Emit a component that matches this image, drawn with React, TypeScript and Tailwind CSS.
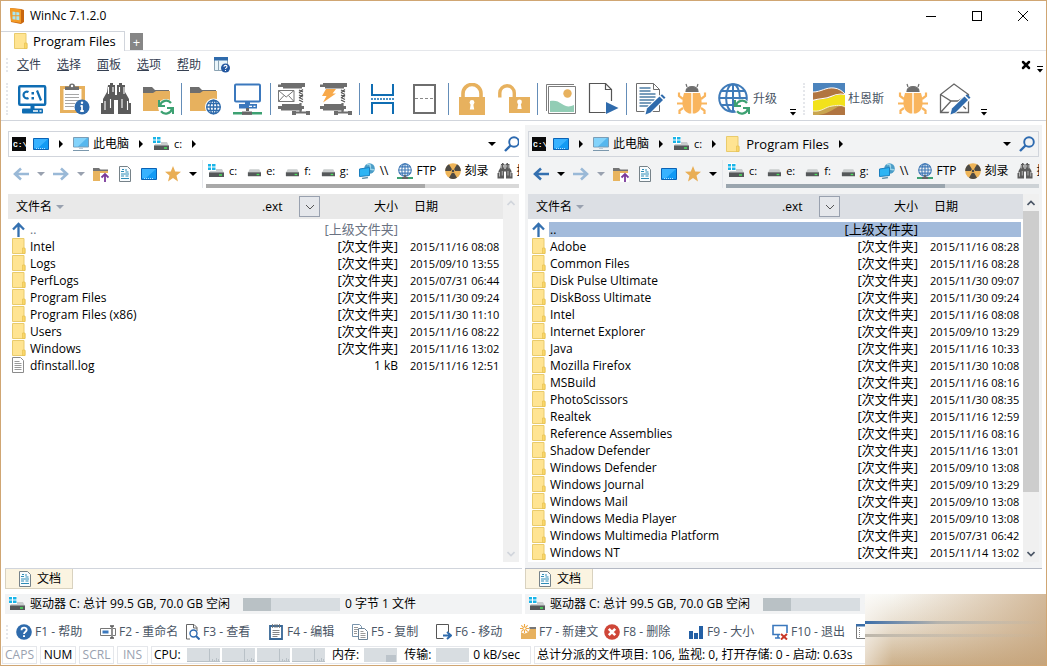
import React, { useState } from "react";
import clsx from "clsx";
import { X } from "lucide-react";

type IconProps = { className?: string };

const GRAY = "#6e6e6e";
const AMBER = "#e7b15e";
const BLUE = "#2f6bac";
const GREEN = "#3da172";

function Svg({ size = 32, className = "w-8 h-8", children }: { size?: number; className?: string; children: React.ReactNode }) {
  return (
    <svg viewBox={`0 0 ${size} ${size}`} className={clsx("shrink-0 block", className)} fill="none" aria-hidden="true">
      {children}
    </svg>
  );
}

/* Shared drawing parts */

function SyncBadge() {
  return (
    <g>
      <circle cx="24" cy="24" r="8" fill="white" />
      <path d="M18 22.5a6.3 6.3 0 0 1 11-2.5M30 25.5a6.3 6.3 0 0 1-11 2.8" stroke={GREEN} strokeWidth="2.2" />
      <path d="M17 17v6h6M31 31v-6h-6" stroke={GREEN} strokeWidth="2" />
    </g>
  );
}

function GlobeLines({ cx, cy, r, color, width }: { cx: number; cy: number; r: number; color: string; width: number }) {
  return (
    <g stroke={color} strokeWidth={width}>
      <circle cx={cx} cy={cy} r={r} />
      <ellipse cx={cx} cy={cy} rx={r * 0.5} ry={r} />
      <path d={`M${cx} ${cy - r}v${2 * r}M${cx - r} ${cy}h${2 * r}M${cx - r * 0.85} ${cy - r * 0.5}h${r * 1.7}M${cx - r * 0.85} ${cy + r * 0.5}h${r * 1.7}`} />
    </g>
  );
}

function BigFolder() {
  return (
    <g>
      <path d="M1 4h9l3 3h14v3H1z" fill={GRAY} />
      <path d="M1 10h10l3-2h14v20H1z" fill={AMBER} />
    </g>
  );
}

function Pen() {
  return (
    <g>
      <path d="M10 31.5l3-6L27 12l4 3.5L17 29z" fill="white" stroke="white" strokeWidth="2" />
      <path d="M13 25.5L25.5 13.5l3.5 3.5L16.5 29.5l-5 2z" fill={BLUE} />
      <path d="M26.5 12.5l1.5-1.3 3.5 3.2-1.5 1.6z" fill={BLUE} />
    </g>
  );
}

/* Toolbar icons */

function CommandIcon() {
  return (
    <Svg>
      <rect x="3.2" y="3.2" width="26" height="18.5" rx="1" stroke="#0f6db3" strokeWidth="2.4" />
      <path d="M12.5 9a3.4 3.4 0 1 0 0 6M21 7.5l4 10" stroke="#0f6db3" strokeWidth="2.2" />
      <path d="M15.5 9H18v2.500h-2.500zM15.500 14H18v2.500h-2.500zM14.500 22h4v4h-4z" fill="#0f6db3" />
      <rect x="6" y="25.5" width="21" height="5" rx="1" fill="#0f6db3" />
      <path d="M17 28h5M23.5 28h2" stroke="white" strokeWidth="1.3" />
    </Svg>
  );
}

function ClipboardInfoIcon() {
  return (
    <Svg>
      <path d="M2 3h25v27H2z" fill={AMBER} />
      <path d="M5.5 6h18v21h-18z" fill="white" />
      <path d="M7 7V3.5h4a3 3 0 0 1 6 0h4V7z" fill={GRAY} />
      <circle cx="14" cy="3" r="1.2" fill="white" />
      <path d="M7 11.5h14M7 14.5h14M7 17.5h14M7 20.5h10M7 23.5h9" stroke="#a7a7a7" />
      <circle cx="24" cy="24" r="7.5" fill={BLUE} />
      <path d="M24 22.5v6M22.5 23h2M22.3 28h3.5" stroke="white" strokeWidth="1.8" />
      <circle cx="24" cy="19.8" r="1.2" fill="white" />
    </Svg>
  );
}

function BinocularsIcon({ className }: IconProps) {
  return (
    <Svg className={className}>
      <path d="M8 2h2V0h3v2h2v10h2V2h2V0h3v2h3v7l4 7v4h2v11H18V17h-4v14H1V20h2v-4l4-7z" fill="#5b5b5b" />
      <path d="M8.5 4v7M13 4v5M19.5 4v5M24 4v7M5 18v9M10.5 16v9M22 16v9M27.5 18v9" stroke="white" strokeWidth="1.1" />
    </Svg>
  );
}

function FolderSyncIcon() {
  return (
    <Svg>
      <BigFolder />
      <SyncBadge />
    </Svg>
  );
}

function FolderGlobeIcon() {
  return (
    <Svg>
      <BigFolder />
      <circle cx="24.5" cy="24" r="8.5" fill="white" />
      <GlobeLines cx={24.5} cy={24} r={6.8} color={BLUE} width={1.4} />
    </Svg>
  );
}

function NetworkIcon() {
  return (
    <Svg>
      <rect x="4" y="1.5" width="25" height="17" rx="1" stroke="#3b78bd" strokeWidth="2" />
      <path d="M14 18.5h5V21h-5zM8 21h18v4.5H8z" fill="#3b78bd" />
      <path d="M18 23.3h3M22.5 23.3h2" stroke="white" strokeWidth="1.2" />
      <path d="M16.5 25v3" stroke="#666" strokeWidth="3" />
      <path d="M2 30.2h10M21 30.2h10" stroke={GREEN} strokeWidth="2.6" />
      <path d="M11 30.2h10" stroke="#666" strokeWidth="3.4" />
    </Svg>
  );
}

function Clamp() {
  return (
    <g>
      <path d="M0 1.5h3V0h24v4h-3v1.500H5V4H0zM0 23h4v-2h18v2h4v3h-2v1.500H3V26H0z" fill={GRAY} />
      <path d="M21 7l4 2M21 9.500l4 2M21 12l4 2M21 14.500l4 2M21 17l4 2M25 6.500l-4 3M25 12l-4 3" stroke="#555" strokeWidth="1.2" />
      <path d="M22.5 20v9M15 29.500h16" stroke={GRAY} strokeWidth="2.2" />
      <path d="M14 28h4v4h-4zM28 28h4v4h-4z" fill={GRAY} />
    </g>
  );
}

function ZipMailIcon() {
  return (
    <Svg>
      <Clamp />
      <path d="M.5 7.500h15.500v11H.5zM.5 7.500l7.700 6.500L16 7.500M.5 18.500l5.500-6M16 18.500l-5.500-6" stroke="#777" />
    </Svg>
  );
}

function ZipFlashIcon() {
  return (
    <Svg>
      <Clamp />
      <path d="M6 6h10l-3.500 4.500H16L3 19.500l3.500-6.500H2z" fill="#f8a94a" />
    </Svg>
  );
}

function SplitIcon() {
  return (
    <Svg>
      <path d="M5 1v11h21V1M5 31V20h21v11" stroke="#0f6db3" strokeWidth="2" />
      <path d="M4 16h23" stroke="#0f6db3" strokeWidth="1.4" strokeDasharray="2 1" />
    </Svg>
  );
}

function SinglePaneIcon() {
  return (
    <Svg>
      <rect x="5" y="2" width="21" height="28" stroke={GRAY} strokeWidth="2" />
      <path d="M6 15.500h19" stroke="#888" strokeDasharray="3 2" />
    </Svg>
  );
}

function Keyhole({ x, y }: { x: number; y: number }) {
  return (
    <g fill="white">
      <circle cx={x} cy={y} r="2.4" />
      <path d={`M${x - 1} ${y}h2l1.200 7h-4.400z`} />
    </g>
  );
}

function LockIcon() {
  return (
    <Svg>
      <path d="M3 14h26v18H3z" fill={AMBER} />
      <path d="M7 14v-3.500a9 9 0 0 1 18 0V14" stroke={AMBER} strokeWidth="3.6" />
      <Keyhole x={16} y={19.5} />
    </Svg>
  );
}

function UnlockIcon() {
  return (
    <Svg>
      <path d="M11 14h21v16H11z" fill={AMBER} />
      <path d="M1.8 14.500V10a7 7 0 0 1 14.500 0v4" stroke={AMBER} strokeWidth="3.4" />
      <Keyhole x={21.5} y={19} />
    </Svg>
  );
}

function PictureIcon() {
  return (
    <Svg>
      <path d="M1.500 28V1.500H29" stroke="#7d7d7d" />
      <path d="M3.500 3.500h27v27h-27z" fill="white" stroke="#7d7d7d" />
      <path d="M5 18c5-1 8 0 12 3s8 3 12 1v7H5z" fill="#92cdb5" />
      <circle cx="22.500" cy="10.500" r="4.200" fill={AMBER} />
    </Svg>
  );
}

function DocPlayIcon() {
  return (
    <Svg>
      <path d="M24.500 18V6.500l-6-6h-16v29h16" stroke="#555" strokeWidth="1.200" />
      <path d="M18.500.5v6h6" stroke="#555" strokeWidth="1.200" />
      <path d="M19 19l12.500 6L19 31z" fill={BLUE} />
    </Svg>
  );
}

function DocPenIcon() {
  return (
    <Svg>
      <path d="M2.500 28.500V.5h17l6 6v22z" stroke={GRAY} />
      <path d="M19.500.5v6h6" stroke={GRAY} />
      <path d="M5.500 5h11M5.500 8h11M5.500 11h16M5.500 14h16M5.500 17h15M5.500 20h12M5.500 23h9" stroke="#4d7ea5" strokeWidth="1.300" />
      <Pen />
    </Svg>
  );
}

function BugIcon() {
  return (
    <Svg>
      <path d="M11 4l-1-3M21 4l1-3M10 8.500c0-6.500 12-6.500 12 0z" fill={GRAY} stroke={GRAY} strokeWidth="1.200" />
      <path d="M7 16L3 13V9.500M25 16l4-3V9.500M7 20.500H1M25 20.500h6M7 25l-3.500 2.500V31M25 25l3.500 2.500V31" stroke="#f9b55e" strokeWidth="2.200" />
      <path d="M8 10h16c3 10 2 18-5 20.500h-6C6 28 5 20 8 10z" fill="#f9b55e" />
      <path d="M16 10v21" stroke="white" strokeWidth="1.400" />
    </Svg>
  );
}

function GlobeSyncIcon() {
  return (
    <Svg>
      <GlobeLines cx={15} cy={15} r={13.8} color="#3f7bb9" width={2} />
      <SyncBadge />
    </Svg>
  );
}

function DuneLogo() {
  return (
    <Svg>
      <path d="M0 0h32v32H0z" fill="#4c84bd" />
      <path d="M0 9c8 0 13-5 21-4 5 .5 8 3 11 6v21H0z" fill="#b17541" />
      <path d="M0 9c8 0 13-5 21-4 5 .5 8 3 11 6" stroke="white" />
      <path d="M0 18c9-3 12-1 18-4s10-3 14-2v20H0z" fill="#f2e21b" />
      <path d="M0 17.500c9-3 12-1 18-4s10-3 14-2" stroke="white" strokeWidth="1.200" />
      <path d="M0 28c9 1 12-4 19-5s10-1 13 1v8H0z" fill="#c9a550" />
      <path d="M5 32c8-1 13-4 18-7s7-1 9-1v8z" fill="#b17541" />
      <path d="M0 28c9 1 12-4 19-5s10-1 13 1" stroke="#f7f0d0" />
    </Svg>
  );
}

function EnvelopeIcon() {
  return (
    <Svg>
      <path d="M1.500 29.500v-18L15 1l14.500 10.500v18zM1.500 11.500L12 18h7l10.500-6.500M1.500 29.500L12 18M19 18l8 8" stroke="#666" strokeWidth="1.300" />
      <Pen />
    </Svg>
  );
}

/* Small icons, 16 pixel grid */

function FolderSmall() {
  return (
    <Svg size={16} className="w-4 h-4">
      <path d="M.5.5h11.500v10h1v5H.5z" fill="#ffe492" stroke="#e9cb6c" />
      <path d="M10.500 10h2.500v5.500h-2.500z" fill="#fbd768" stroke="#e3bd4e" strokeWidth=".6" />
    </Svg>
  );
}

function FileSmall() {
  return (
    <Svg size={16} className="w-4 h-4">
      <path d="M.5.5h8l3 3v12H.5z" fill="white" stroke="#8b8b8b" />
      <path d="M2.500 4.500h5M2.500 6.500h7M2.500 8.500h7M2.500 10.500h7M2.500 12.500h7" stroke="#9a9a9a" />
    </Svg>
  );
}

function UpIcon() {
  return (
    <Svg size={16} className="w-4 h-4">
      <path d="M6.500 15V2M1 7.500L6.500 2 12 7.500" stroke="#3470b0" strokeWidth="2.300" />
    </Svg>
  );
}

function CmdBox() {
  return (
    <Svg size={16} className="w-4 h-4">
      <path d="M0 1h14v14H0z" fill="#0a0a0a" />
      <text x="1" y="11" fill="white" fontSize="8" fontWeight="700" fontFamily="Liberation Mono, monospace">C:\</text>
    </Svg>
  );
}

function ScreenIcon() {
  return (
    <Svg size={16} className="w-4 h-4">
      <path d="M.5 2.500h15v11H.5z" fill="#129af4" stroke="#0a62b5" />
      <path d="M1 3h14L5 12H1z" fill="#38b2ff" />
      <path d="M3 12.500h10" stroke="#b6e1ff" strokeDasharray="1 1" />
    </Svg>
  );
}

function ComputerIcon() {
  return (
    <Svg size={16} className="w-4 h-4">
      <path d="M.5 1.500h15v9.500H.5z" fill="#56b7ee" stroke="#7a9db6" />
      <path d="M1 2h13L5 10.500H1z" fill="#83d3fb" />
      <path d="M6 11h4v2H6z" fill="#bccbd6" />
      <path d="M0 14.500h16" stroke="#7b98ad" />
    </Svg>
  );
}

function DriveIcon({ system = false, className = "w-4 h-4" }: IconProps & { system?: boolean }) {
  return (
    <Svg size={16} className={className}>
      <path d="M3 6h11l2 4H1z" fill="#c9cccd" />
      <path d="M1 9.500h15v4.500H1z" fill="#55585a" />
      <path d="M11 12h3" stroke="#49e35c" strokeWidth="1.500" />
      {system && (
        <g>
          <path d="M0 0h8v8H0z" fill="white" />
          <path d="M0 1h3v2.500H0zM4 1h3.500v2.500H4zM0 4.500h3V7H0zM4 4.500h3.500V7H4z" fill="#19b4e8" />
        </g>
      )}
    </Svg>
  );
}

function SearchIcon() {
  return (
    <Svg size={16} className="w-4 h-4">
      <circle cx="10" cy="6" r="4.800" stroke="#2d6ab0" strokeWidth="1.900" />
      <path d="M6.500 9.500l-5.500 5.500" stroke="#2d6ab0" strokeWidth="2.400" />
    </Svg>
  );
}

function Arrow({ back = false, faded = false }: { back?: boolean; faded?: boolean }) {
  return (
    <Svg size={16} className={clsx("w-4 h-4", back && "rotate-180")}>
      <path d="M0 8h14M8 2.500L14 8l-6 5.500" stroke={faded ? "#9ab9d7" : "#3470b0"} strokeWidth="2.600" />
    </Svg>
  );
}

function FolderUpIcon() {
  return (
    <Svg size={16} className="w-4 h-4">
      <path d="M0 2h6l1.500 1.500H15V6H0z" fill="#757575" />
      <path d="M0 5h15v10H0z" fill="#e8b45f" />
      <path d="M7 7h9v9H7z" fill="white" />
      <path d="M12 16V8M8.500 11.500L12 8l3.500 3.500" stroke="#7b3a9b" strokeWidth="1.800" />
    </Svg>
  );
}

function DocIcon() {
  return (
    <Svg size={16} className="w-4 h-4">
      <path d="M2.500.5h8l3 3v12h-11z" fill="#f9fcfe" stroke="#768289" />
      <path d="M4 5.500h3M8 4h2M4 8h8M8.500 6h3M4 10h3M8.500 10h3M4 12.500h8M5 3.500h2" stroke="#2e8cb8" strokeWidth="1.200" />
    </Svg>
  );
}

function StarIcon() {
  return (
    <Svg size={16} className="w-4 h-4">
      <path d="M8 0l2.200 5.500 5.800.3-4.500 3.700L13 15.500 8 12l-5 3.500 1.500-6L0 5.800l5.800-.3z" fill="#e9ae55" />
    </Svg>
  );
}

function NetPlaceIcon() {
  return (
    <Svg size={16} className="w-4 h-4">
      <circle cx="10.500" cy="5.500" r="5.300" fill="#4b9dc7" />
      <path d="M8 2c3-2 4 1 3 3s3 1 4 2" stroke="#9bd4e8" strokeWidth="1.500" />
      <path d="M.5 6l10-1.500v8L.5 13.500z" fill="#2cb4f4" stroke="#1a7fbf" />
      <path d="M3 15.500l6-1" stroke="#6895ac" strokeWidth="1.500" />
    </Svg>
  );
}

function FtpIcon() {
  return (
    <Svg size={16} className="w-4 h-4">
      <GlobeLines cx={8} cy={7} r={6.3} color="#3f78b6" width={1.1} />
      <path d="M0 15h5M11 15h5" stroke={GREEN} strokeWidth="1.800" />
      <path d="M5 15h6M8 12v3" stroke="#666" strokeWidth="1.800" />
    </Svg>
  );
}

function BurnIcon() {
  return (
    <Svg size={16} className="w-4 h-4">
      <circle cx="8" cy="8" r="7.800" fill="#eeb458" />
      <path d="M8 8L4 1.300a7.800 7.800 0 0 0-3.800 6.700zM8 8l4-6.700a7.800 7.800 0 0 1 3.800 6.700zM8 8l-4 6.700a7.800 7.800 0 0 0 8 0z" fill="#4d4a45" />
      <circle cx="8" cy="8" r="1.700" fill="#4d4a45" stroke="#eeb458" strokeWidth=".8" />
    </Svg>
  );
}

/* Function key icons */

const FKEY_ICONS: Record<string, React.ReactNode> = {
  F1: (
    <g>
      <circle cx="8" cy="8" r="7.800" fill={BLUE} />
      <path d="M5.500 6.200c0-3.400 5.300-3.200 5.200-.3C10.600 7.800 8.100 7.600 8 10" stroke="white" strokeWidth="1.800" />
      <path d="M7 11.200h2v1.800H7z" fill="white" />
    </g>
  ),
  F2: (
    <g>
      <path d="M11 4.500H.5v7H11M13 4.500h2.500v7H13" stroke="#777" />
      <path d="M2.500 6.500h6v3h-6z" fill="#3b78bd" />
      <path d="M10 2h4M10 14h4M12 2v12" stroke="#555" strokeWidth="1.300" />
    </g>
  ),
  F3: (
    <g>
      <path d="M6 15H2.500V.5H10l3 3V7" stroke="#666" />
      <path d="M9.500.5V4H13" stroke="#666" />
      <circle cx="9.500" cy="9.500" r="3.500" fill="white" stroke="#2d6ab0" strokeWidth="1.400" />
      <path d="M12 12l3.500 3.500" stroke="#2d6ab0" strokeWidth="2" />
    </g>
  ),
  F4: (
    <g>
      <path d="M2 2h12v13H2z" fill="white" stroke="#386796" strokeWidth="1.800" />
      <path d="M4.500 0v4M7 0v4M9 0v4M11.500 0v4M4.500 6.500h7M4.500 8.500h7M4.500 10.500h7M4.500 12.500h5" stroke="#777" strokeWidth=".9" />
    </g>
  ),
  F5: (
    <g>
      <path d="M6 12.500H.5V.5h7l2 2V4" stroke="#7994ac" />
      <path d="M2 3.500h4M2 5.500h4M2 7.500h3M2 9.500h3" stroke="#999" />
      <path d="M6.500 4.500h6l3 3v8h-9z" fill="white" stroke="#6a8297" />
      <path d="M8.500 7.500h3M8.500 9.500h5M8.500 11.500h5M8.500 13.500h5" stroke="#999" />
    </g>
  ),
  F6: (
    <g>
      <path d="M12.500 8V.5H.5v14h7" stroke="#555" />
      <path d="M7 11.500h7M11 8l4 3.500-4 3.500" stroke={BLUE} strokeWidth="1.900" />
    </g>
  ),
  F7: (
    <g>
      <path d="M8 3h8v2H8z" fill="#777" />
      <path d="M1 6h7l2-1h6v10H1z" fill={AMBER} />
      <circle cx="4.500" cy="4.500" r="5" fill="white" />
      <path d="M4.500 0v9M0 4.500h9M1.300 1.300l6.400 6.400M7.700 1.300L1.300 7.700" stroke="#efa944" strokeWidth="1.100" />
      <circle cx="4.500" cy="4.500" r="1.500" fill="white" stroke="#efa944" strokeWidth=".8" />
    </g>
  ),
  F8: (
    <g>
      <circle cx="8" cy="8" r="7.800" fill="#cf4638" />
      <path d="M4.800 4.800l6.400 6.400M11.200 4.800l-6.400 6.400" stroke="white" strokeWidth="2.600" />
    </g>
  ),
  F9: <path d="M1 7h4v8H1zM6 9h4v6H6zM11 2h4v13h-4z" fill="#2460a5" />,
  F10: (
    <g>
      <path d="M8 10.500H1v-9h14V9" stroke="#3b78bd" strokeWidth="1.600" />
      <path d="M3 14h5M6 11v3" stroke="#3b78bd" strokeWidth="1.600" />
      <path d="M9 10l6 5.500M15 10l-6 5.500" stroke="#c93828" strokeWidth="2" />
    </g>
  ),
  F11: (
    <g>
      <path d="M.5.5h15v14H.5z" stroke="#777" />
      <path d="M3.500 4v10" stroke="#888" strokeDasharray="1 1" />
      <path d="M0 0h16v2.500H0z" fill="#3b6ea8" />
    </g>
  ),
};

const TOOLBAR: { label: string; icon?: React.FC }[] = [
  { label: "Command prompt", icon: CommandIcon },
  { label: "Properties", icon: ClipboardInfoIcon },
  { label: "Find", icon: BinocularsIcon },
  { label: "Synchronize", icon: FolderSyncIcon },
  { label: "-" },
  { label: "Web folder", icon: FolderGlobeIcon },
  { label: "Network", icon: NetworkIcon },
  { label: "-" },
  { label: "Zip mail", icon: ZipMailIcon },
  { label: "Quick zip", icon: ZipFlashIcon },
  { label: "-" },
  { label: "Split view", icon: SplitIcon },
  { label: "Single view", icon: SinglePaneIcon },
  { label: "-" },
  { label: "Encrypt", icon: LockIcon },
  { label: "Decrypt", icon: UnlockIcon },
  { label: "-" },
  { label: "Pictures", icon: PictureIcon },
  { label: "Run file", icon: DocPlayIcon },
  { label: "-" },
  { label: "Edit", icon: DocPenIcon },
  { label: "Report bug", icon: BugIcon },
];

const MENUS = [
  ["文", "件"],
  ["选", "择"],
  ["面", "板"],
  ["选", "项"],
  ["帮", "助"],
];

const FKEYS = [
  ["F1", "帮助"],
  ["F2", "重命名"],
  ["F3", "查看"],
  ["F4", "编辑"],
  ["F5", "复制"],
  ["F6", "移动"],
  ["F7", "新建文"],
  ["F8", "删除"],
  ["F9", "大小"],
  ["F10", "退出"],
];

type Entry = { name: string; date: string; size?: string };

const LEFT_FILES: Entry[] = [
  { name: "Intel", date: "2015/11/16 08:08" },
  { name: "Logs", date: "2015/09/10 13:55" },
  { name: "PerfLogs", date: "2015/07/31 06:44" },
  { name: "Program Files", date: "2015/11/30 09:24" },
  { name: "Program Files (x86)", date: "2015/11/30 11:10" },
  { name: "Users", date: "2015/11/16 08:22" },
  { name: "Windows", date: "2015/11/16 13:02" },
  { name: "dfinstall.log", date: "2015/11/16 12:51", size: "1 kB" },
];

const RIGHT_FILES: Entry[] = [
  { name: "Adobe", date: "2015/11/16 08:28" },
  { name: "Common Files", date: "2015/11/16 08:28" },
  { name: "Disk Pulse Ultimate", date: "2015/11/30 09:07" },
  { name: "DiskBoss Ultimate", date: "2015/11/30 09:24" },
  { name: "Intel", date: "2015/11/16 08:08" },
  { name: "Internet Explorer", date: "2015/09/10 13:29" },
  { name: "Java", date: "2015/11/16 10:33" },
  { name: "Mozilla Firefox", date: "2015/11/30 10:08" },
  { name: "MSBuild", date: "2015/11/16 08:16" },
  { name: "PhotoScissors", date: "2015/11/30 08:35" },
  { name: "Realtek", date: "2015/11/16 12:59" },
  { name: "Reference Assemblies", date: "2015/11/16 08:16" },
  { name: "Shadow Defender", date: "2015/11/16 13:01" },
  { name: "Windows Defender", date: "2015/09/10 13:08" },
  { name: "Windows Journal", date: "2015/09/10 13:29" },
  { name: "Windows Mail", date: "2015/09/10 13:08" },
  { name: "Windows Media Player", date: "2015/09/10 13:08" },
  { name: "Windows Multimedia Platform", date: "2015/07/31 06:42" },
  { name: "Windows NT", date: "2015/11/14 13:02" },
];

function Triangle({ down = false, className = "text-black" }: { down?: boolean; className?: string }) {
  return (
    <svg viewBox="0 0 8 8" className={clsx("w-2 h-2 shrink-0 block", className)} fill="currentColor" aria-hidden="true">
      <path d={down ? "M0 2h8L4 6z" : "M2 0v8l4-4z"} />
    </svg>
  );
}

function Overflow() {
  return (
    <svg viewBox="0 0 6 7" className="w-[6px] h-[7px] shrink-0" aria-hidden="true">
      <path d="M0 .5h6" stroke="black" />
      <path d="M0 3h6L3 6.500z" fill="black" />
    </svg>
  );
}

function Grip({ className }: IconProps) {
  return <div className={clsx("w-0 border-l-2 border-dotted border-gray-200 shrink-0", className)} />;
}

function ScrollArrow({ down = false, className }: { down?: boolean; className?: string }) {
  return (
    <button type="button" aria-label={down ? "Scroll down" : "Scroll up"} className={clsx("h-[17px] w-4 flex items-center justify-center", className)}>
      <svg viewBox="0 0 8 6" className={clsx("w-2 h-[6px]", down && "rotate-180")} fill="none" aria-hidden="true">
        <path d="M.5 5L4 1.500 7.500 5" stroke="currentColor" strokeWidth="1.600" />
      </svg>
    </button>
  );
}

function PathBar({ active }: { active: boolean }) {
  return (
    <div className={clsx("h-[26px] border border-gray-300 flex items-center overflow-hidden", active ? "pr-[3px]" : "border-r-0 bg-white")}>
      <div className="w-6 pl-[3px]"><CmdBox /></div>
      <button type="button" aria-label="Desktop" className="w-6"><ScreenIcon /></button>
      <Triangle />
      <button type="button" className="flex items-center gap-1 mx-2 whitespace-nowrap">
        <ComputerIcon />此电脑
      </button>
      <Triangle />
      <button type="button" className="flex items-center gap-[5px] mx-2 text-[11px]">
        <DriveIcon system />c:
      </button>
      <Triangle />
      {active && (
        <button type="button" className="flex items-center gap-1 mx-2 text-[13px] whitespace-nowrap">
          <FolderSmall />Program Files
        </button>
      )}
      {active && <Triangle />}
      <div className="flex-1" />
      <button type="button" aria-label="History" className="mr-2"><Triangle down /></button>
      <button type="button" aria-label="Search" className={active ? "w-4" : "w-[15px]"}><SearchIcon /></button>
    </div>
  );
}

function NavBar({ active }: { active: boolean }) {
  const drives = ["e:", "f:", "g:"];
  return (
    <div className="h-[37px] flex items-start overflow-hidden">
      <div className="h-[34px] flex items-center pl-[5px] shrink-0">
        <button type="button" aria-label="Back"><Arrow back faded={!active} /></button>
        <button type="button" aria-label="Back history" className="ml-2"><Triangle down className={active ? "text-black" : "text-gray-400"} /></button>
        <button type="button" aria-label="Forward" className="ml-2"><Arrow faded /></button>
        <button type="button" aria-label="Forward history" className="ml-2"><Triangle down className="text-gray-400" /></button>
        <button type="button" aria-label="Parent folder" className="ml-2"><FolderUpIcon /></button>
        <button type="button" aria-label="Documents" className="ml-2"><DocIcon /></button>
        <button type="button" aria-label="Desktop" className="ml-2"><ScreenIcon /></button>
        <button type="button" aria-label="Favorites" className="ml-2"><StarIcon /></button>
        <button type="button" aria-label="Favorites list" className="ml-2"><Triangle down /></button>
        <div className="w-px h-7 bg-gray-200 ml-[5px] mr-[3px]" />
      </div>
      <div className="flex-1 min-w-0 overflow-hidden">
        <div className="h-[27px] pl-[2px] flex items-center gap-2 whitespace-nowrap">
          <button type="button" className="mr-[2px] flex items-center gap-[5px] shrink-0 text-[11px]"><DriveIcon system />c:</button>
          {drives.map((d) => (
            <button type="button" key={d} className="mr-[2px] flex items-center gap-[5px] shrink-0 text-[11px]">
              <DriveIcon className="w-[14px] h-4" />{d}
            </button>
          ))}
          <button type="button" className="flex items-center gap-[5px] shrink-0"><NetPlaceIcon />\\</button>
          <button type="button" className="flex items-center gap-1 shrink-0"><FtpIcon />FTP</button>
          <button type="button" className="flex items-center gap-1 shrink-0"><BurnIcon />刻录</button>
          <button type="button" className="flex items-center gap-1 shrink-0"><BinocularsIcon className="w-4 h-4" />搜索</button>
        </div>
        <div className={clsx("h-1", active ? "bg-[#cdd2d6]" : "bg-[#d9d9d9]")}>
          <div className={clsx("h-full w-[70%]", active ? "bg-[#9aa5ae]" : "bg-[#a9a9a9]")} />
        </div>
      </div>
    </div>
  );
}

function FileTable({ files, active }: { files: Entry[]; active: boolean }) {
  const head = active ? "bg-[#dcdfe4]" : "bg-[#e9e9e9]";
  const sel = active ? "bg-[#a3bbdb] text-black" : "text-gray-500";
  return (
    <div className="h-[368px] flex overflow-hidden bg-white">
      <div className="flex-1 min-w-0 overflow-hidden">
        <table className="w-full table-fixed border-separate border-spacing-0 text-[12px] leading-[17px]">
          <colgroup>
            <col className="w-[21px]" />
            <col />
            <col className="w-[63px]" />
            <col className="w-[78px]" />
            <col className="w-[105px]" />
          </colgroup>
          <thead>
            <tr className="text-left [&>th]:h-[27px] [&>th]:p-0 [&>th]:font-normal [&>th]:border-b-2 [&>th]:border-white">
              <th colSpan={2} className={head}>
                <div className="flex items-center gap-1 pl-2">文件名<Triangle down className="text-gray-400" /></div>
              </th>
              <th className={head}>
                <div className="flex items-center justify-between pl-[5px]">
                  .ext
                  <button type="button" aria-label="Filter extension" className="w-[21px] h-[21px] border border-gray-400 bg-gray-200 flex items-center justify-center">
                    <svg viewBox="0 0 8 6" className="w-2 h-[6px]" fill="none" aria-hidden="true">
                      <path d="M0 1l4 4 4-4" stroke="#555" />
                    </svg>
                  </button>
                </div>
              </th>
              <th className={head}><div className="text-right">大小</div></th>
              <th className={head}><div className="pl-4">日期</div></th>
            </tr>
          </thead>
          <tbody className="[&_td]:h-[17px] [&_td]:p-0 [&_td]:whitespace-nowrap">
            <tr>
              <td><div className="pl-1 h-[15px]"><UpIcon /></div></td>
              <td><div className={clsx("h-[15px] leading-[15px] pl-px", sel)}>..</div></td>
              <td colSpan={2}><div className={clsx("h-[15px] leading-[15px] text-right text-[13px]", sel)}>[上级文件夹]</div></td>
              <td><div className={clsx("h-[15px] mr-[2px]", sel)} /></td>
            </tr>
            {files.map((f) => (
              <tr key={f.name}>
                <td><div className="h-[17px] pl-1">{f.size ? <FileSmall /> : <FolderSmall />}</div></td>
                <td><div className="h-[17px] pl-px">{f.name}</div></td>
                <td colSpan={2}><div className={clsx("h-[17px] text-right", f.size ? "text-[12px]" : "text-[13px]")}>{f.size ?? "[次文件夹]"}</div></td>
                <td><div className="h-[17px] pl-3 text-[11px]">{f.date}</div></td>
              </tr>
            ))}
          </tbody>
        </table>
      </div>
      <div className="w-4 bg-[#f0f0f0] flex flex-col shrink-0">
        <ScrollArrow className={active ? "text-gray-600" : "text-gray-300"} />
        <div className="flex-1">{active && <div className="h-[84%] bg-[#cdcdcd]" />}</div>
        <ScrollArrow down className={active ? "text-gray-600" : "text-gray-300"} />
      </div>
    </div>
  );
}

function Pane({ files, active = false }: { files: Entry[]; active?: boolean }) {
  return (
    <section className="min-w-0">
      <div className={clsx("mt-1 py-[6px] px-[3px] border-b", active ? "bg-[#f2f3f4] border-[#b4b9c4]" : "border-gray-300")}>
        <PathBar active={active} />
        <NavBar active={active} />
        <FileTable files={files} active={active} />
      </div>
      <div className="h-5 flex">
        <button type="button" className="h-5 w-[68px] bg-[#fbf4e1] border border-t-0 border-[#d9d2bf] flex items-center gap-1 pl-[11px]">
          <DocIcon />文档
        </button>
      </div>
      <div className="mt-[5px] h-5 bg-[#f2f3f4] flex items-center gap-[5px] pl-1 whitespace-nowrap overflow-hidden">
        <DriveIcon system />
        <span className="w-[208px]">驱动器 C: 总计 99.5 GB, 70.0 GB 空闲</span>
        <div className="w-[97px] h-[13px] bg-[#d8dde1] shrink-0">
          <div className="h-full w-[29%] bg-[#b9c1c5]" />
        </div>
        <span>0 字节 1 文件</span>
      </div>
    </section>
  );
}

function Meter({ spikes = true }: { spikes?: boolean }) {
  return (
    <svg viewBox="0 0 33 14" className="w-[33px] h-[14px] shrink-0" aria-hidden="true">
      <path d="M0 0h33v14H0z" fill="#d8dde1" />
      {spikes ? <path d="M22.500 1v13M25.500 11v3M27.500 12v1M29.500 10v3M31.500 11v2M0 13.500h33" stroke="#b9c1c7" /> : <path d="M22 7h10v7H22z" fill="#bcc4cb" />}
    </svg>
  );
}

function StatusBar() {
  const box = "h-[18px] border border-gray-200 flex items-center whitespace-nowrap shrink-0";
  return (
    <footer className="mt-[2px] pl-px flex gap-[3px] overflow-hidden">
      <div className={clsx(box, "w-[35px] justify-center text-gray-400")}>CAPS</div>
      <div className={clsx(box, "w-[36px] justify-center")}>NUM</div>
      <div className={clsx(box, "w-[35px] justify-center text-gray-400")}>SCRL</div>
      <div className={clsx(box, "w-[31px] justify-center text-gray-400")}>INS</div>
      <div className={clsx(box, "w-[380px] gap-[2px] pl-[2px]")}>
        <span className="w-[31px]">CPU:</span>
        <Meter /><Meter /><Meter /><Meter />
        <span className="ml-[5px] mr-[3px]">内存:</span>
        <Meter spikes={false} />
        <span className="ml-[5px] mr-[3px]">传输:</span>
        <div className="w-[33px] h-[14px] bg-[#d8dde1]" />
        <span className="ml-[2px]">0 kB/sec</span>
      </div>
      <div className={clsx(box, "flex-1 pl-[2px]")}>总计分派的文件项目: 106, 监视: 0, 打开存储: 0 - 启动: 0.63s</div>
    </footer>
  );
}

export default function App() {
  const [activeKey, setActiveKey] = useState("");

  return (
    <div className="relative w-full min-h-screen bg-white border border-[#d0a673] flex flex-col text-[12px] leading-4 text-black overflow-hidden font-['Open_Sans','Noto_Sans_CJK_SC',sans-serif]">
      {/* Title bar */}
      <header className="h-[30px] flex items-center pl-2">
        <Svg size={16} className="w-4 h-4">
          <path d="M1 0l11 1 3 1v12l-3 2-10-2z" fill="#c8660f" />
          <path d="M1 0l11 1.500V15L2 13.500z" fill="#f39a25" />
          <path d="M3.500 3.500l3 .4v3.400h-3zM7.300 4l3 .4v2.900h-3zM3.500 8.200h3v3.500l-3-.4zM7.300 8.200h3v4l-3-.4z" fill="#a9e6f4" />
        </Svg>
        <h1 className="ml-[5px]">WinNc 7.1.2.0</h1>
        <div className="ml-auto flex [&>button]:w-[46px] [&>button]:h-[28px] [&>button]:flex [&>button]:items-center [&>button]:justify-center">
          <button type="button" aria-label="Minimize"><span className="w-[10px] h-px bg-black" /></button>
          <button type="button" aria-label="Maximize"><span className="w-[10px] h-[10px] border border-black" /></button>
          <button type="button" aria-label="Close">
            <svg viewBox="0 0 10 10" className="w-[10px] h-[10px]"><path d="M0 0l10 10M10 0L0 10" stroke="black" /></svg>
          </button>
        </div>
      </header>

      {/* Folder tabs */}
      <div className="h-5 flex items-end">
        <button type="button" className="h-5 w-[124px] pb-[2px] border-t border-r border-gray-300 flex items-center gap-[3px] pl-[13px] text-[13px] whitespace-nowrap">
          <FolderSmall />Program Files
        </button>
        <div className="flex-1 h-5 border-b border-gray-200 flex items-end">
          <button type="button" aria-label="New tab" className="ml-[5px] w-[13px] h-[17px] bg-[#868686] text-white text-[13px] leading-4">+</button>
        </div>
      </div>

      {/* Menu */}
      <nav className="h-[27px] flex items-center pl-[5px] text-gray-700">
        <Grip className="h-[14px]" />
        <div className="flex ml-[9px] gap-4">
          {MENUS.map(([key, rest]) => (
            <button type="button" key={key + rest} className="w-6 whitespace-nowrap"><u>{key}</u>{rest}</button>
          ))}
        </div>
        <button type="button" aria-label="Help window" className="ml-[13px]">
          <Svg size={16} className="w-4 h-4">
            <path d="M.5.5h13v13H.5z" fill="#eaf5fa" stroke="#8ba3b3" />
            <path d="M0 0h14v3.500H0z" fill="#2f6bac" />
            <path d="M4.500 3v10" stroke="#8ba3b3" />
            <circle cx="11.500" cy="11" r="4.500" fill="#2458a0" />
            <path d="M10 9.800c0-2 3-1.800 3 0 0 1.200-1.500 1-1.500 2.200M11.500 13v1" stroke="white" strokeWidth="1.100" />
          </Svg>
        </button>
        <button type="button" aria-label="Close panel" className="ml-auto"><X className="w-3 h-3 text-black" strokeWidth={5} /></button>
        <span className="ml-[5px] mr-[3px] pt-[10px]"><Overflow /></span>
      </nav>

      {/* Toolbar */}
      <div className="h-[43px] border-b border-gray-300 flex items-center pl-[5px] text-gray-600">
        <Grip className="h-8" />
        <div className="flex items-center ml-[3px]">
          {TOOLBAR.map(({ label, icon: Icon }, i) =>
            Icon ? (
              <button type="button" key={i} aria-label={label} className="w-[42px] h-8 flex justify-center"><Icon /></button>
            ) : (
              <div key={i} className="w-px h-8 mx-[2px] bg-[#648db8]" />
            )
          )}
          <button type="button" className="ml-[5px] flex items-center gap-[3px] whitespace-nowrap"><GlobeSyncIcon />升级</button>
        </div>
        <span className="ml-[13px] pt-[26px]"><Overflow /></span>
        <Grip className="h-8 ml-[7px]" />
        <button type="button" className="ml-[8px] flex items-center gap-[3px] whitespace-nowrap"><DuneLogo />杜恩斯</button>
        <button type="button" aria-label="Report bug" className="ml-[13px]"><BugIcon /></button>
        <button type="button" aria-label="Send mail" className="ml-[10px]"><EnvelopeIcon /></button>
        <span className="ml-[10px] pt-[26px]"><Overflow /></span>
      </div>

      {/* Panes */}
      <main className="grid grid-cols-2 gap-[3px] px-1">
        <Pane files={LEFT_FILES} />
        <Pane files={RIGHT_FILES} active />
      </main>

      {/* Function keys */}
      <div className="mt-[6px] h-6 flex items-center pl-[5px] text-gray-600">
        <Grip className="h-[14px]" />
        <div className="flex ml-2">
          {FKEYS.map(([key, label]) => (
            <button
              type="button"
              key={key}
              onClick={() => setActiveKey(key)}
              aria-pressed={activeKey === key}
              className="w-[84px] flex items-center gap-[3px] whitespace-nowrap"
            >
              <Svg size={16} className="w-4 h-4">{FKEY_ICONS[key]}</Svg>
              {key} - {label}
            </button>
          ))}
          <button type="button" aria-label="F11">
            <Svg size={16} className="w-4 h-4">{FKEY_ICONS.F11}</Svg>
          </button>
        </div>
      </div>

      <StatusBar />

      {/* Tan fade over the lower right corner */}
      <div className="absolute right-0 bottom-0 w-[181px] h-[71px] bg-linear-to-b from-[#f8f7f3] via-[#e6dbca] to-[#ccb08a] pointer-events-none">
        <div className="h-full pt-[27px] bg-linear-to-r from-white/50 via-transparent via-15% to-[#c39f75]/70">
          <div className="h-[3px] bg-linear-to-r from-[#3b6ea8] via-[#b5b3ad] via-40% to-transparent" />
          <div className="mt-[10px] h-[3px] bg-linear-to-r from-[#bdb6aa] to-transparent" />
        </div>
      </div>
    </div>
  );
}
